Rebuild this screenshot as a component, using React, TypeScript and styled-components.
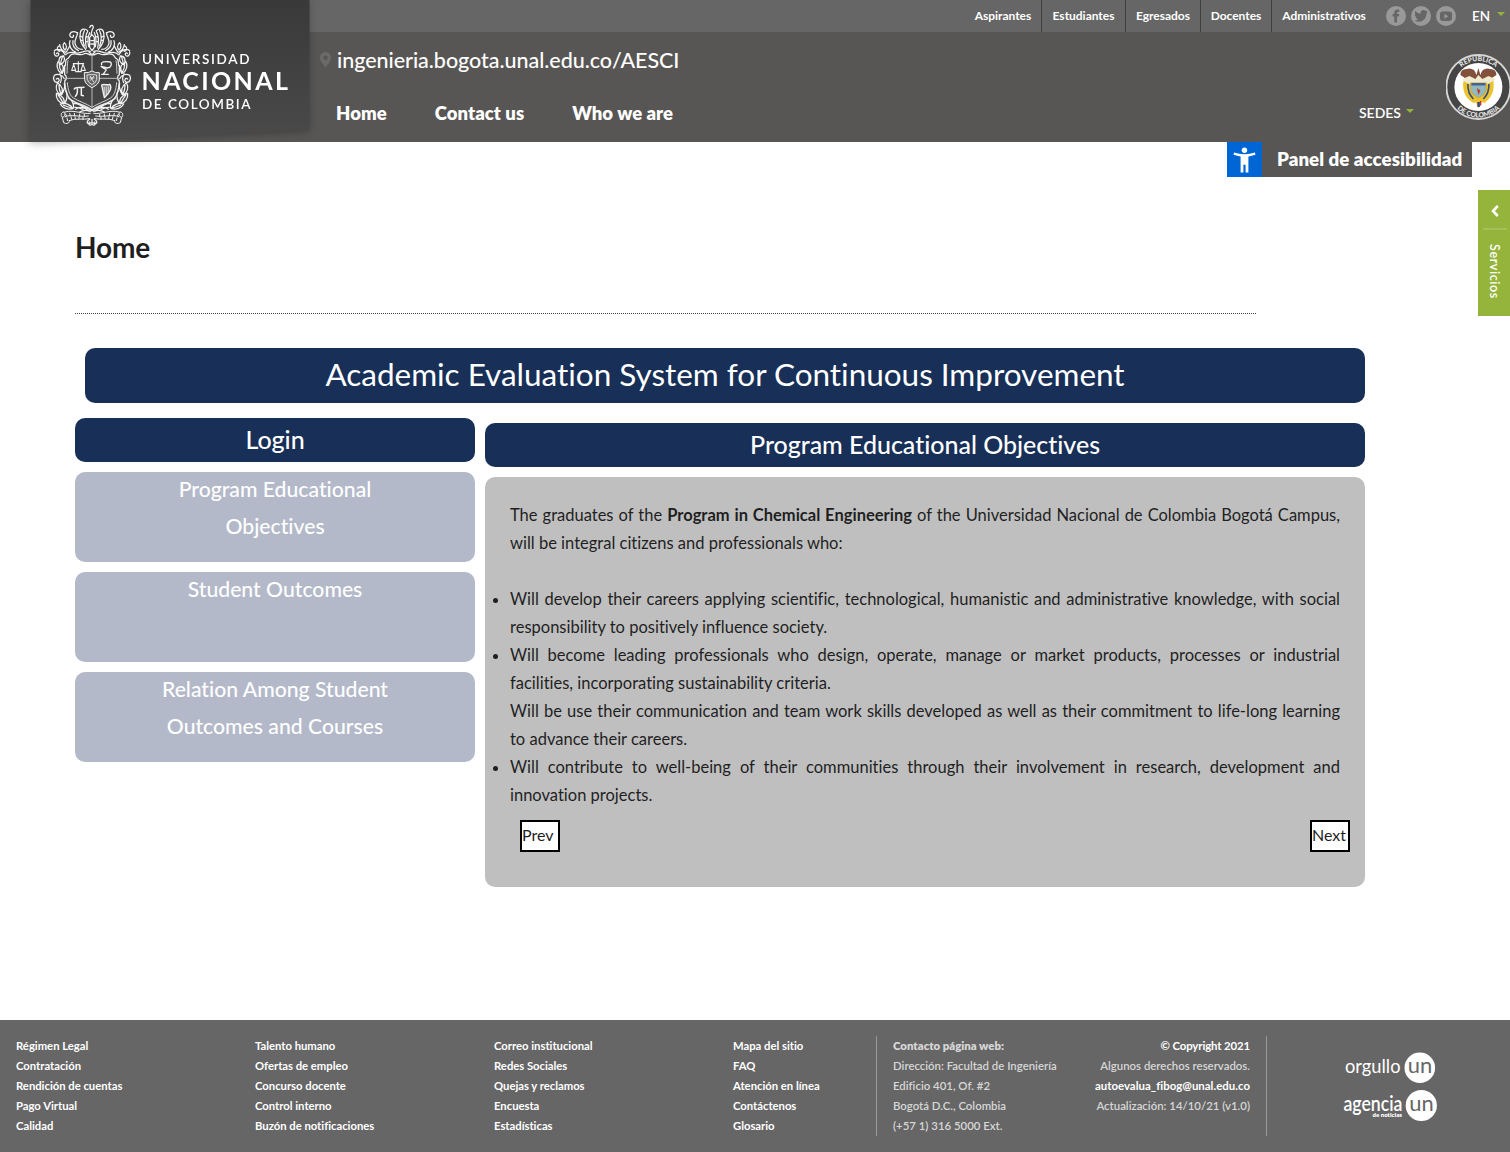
import React from "react";
import styled, { createGlobalStyle } from "styled-components";

const GlobalStyle = createGlobalStyle`
  * { box-sizing: border-box; }
  body {
    margin: 0;
    background: #fff;
    color: #1f1f1f;
    font-family: Lato, "Open Sans", sans-serif;
    font-variant-ligatures: none;
    overflow: hidden;
  }
  ul { margin: 0; padding: 0; list-style: none; }
  a { color: inherit; text-decoration: none; }
`;

const Page = styled.div`
  position: relative;
  width: 1510px;
  height: 1152px;
  display: flex;
  flex-direction: column;
  overflow: hidden;
`;

/* ---------- header ---------- */

const Header = styled.header`
  position: relative;
  z-index: 1;
  height: 142px;
  background: #585654;
  color: #fff;
  display: flex;
  flex-direction: column;
`;

const TopBar = styled.div`
  height: 32px;
  background: #666;
  display: flex;
  justify-content: flex-end;
  align-items: center;
`;

const ProfileLink = styled.a<{ $width: number }>`
  width: ${(p) => p.$width}px;
  height: 32px;
  line-height: 31px;
  font-size: 12px;
  font-weight: 700;
  letter-spacing: -0.02px;
  text-align: center;
  border-left: 1px solid #403f3e;
  &:first-child { border-left-color: transparent; }
`;

const SocialList = styled.div`
  display: flex;
  gap: 5px;
  margin: 0 16px 0 10px;
`;

const Language = styled.a`
  display: flex;
  align-items: center;
  gap: 7px;
  width: 38px;
  font-size: 13.5px;
  font-weight: 600;
  line-height: 32px;
`;

const Caret = styled.span`
  width: 0;
  height: 0;
  margin-top: -4px;
  border: 4.5px solid transparent;
  border-top-color: #94b43b;
  border-bottom: 0;
`;

const HeaderBody = styled.div`
  flex: 1;
  display: flex;
  justify-content: space-between;
  padding-left: 320px;
`;

const SiteBlock = styled.div`
  display: flex;
  flex-direction: column;
  padding-top: 15px;
`;

const SiteAddress = styled.a`
  display: flex;
  align-items: center;
  gap: 6px;
  height: 26px;
  font-size: 21.5px;
  font-weight: 500;
  line-height: 26px;
  letter-spacing: -0.04px;
`;

const MainNav = styled.nav`
  display: flex;
  gap: 48px;
  padding: 28px 0 0 16px;
  font-size: 18.5px;
  font-weight: 800;
  line-height: 24px;
  letter-spacing: 0.05px;
`;

const HeaderSide = styled.div`
  display: flex;
  gap: 32px;
`;

const Campuses = styled.a`
  display: flex;
  align-items: center;
  align-self: flex-start;
  gap: 5px;
  margin-top: 71px;
  font-size: 14px;
  font-weight: 600;
  line-height: 20px;
`;

const SealFrame = styled.div`
  width: 64px;
  height: 68px;
  margin-top: 22px;
  overflow: hidden;
`;

const LogoShadow = styled.a`
  position: absolute;
  left: 30px;
  top: 0;
  width: 280px;
  height: 142px;
  filter: drop-shadow(-1px 1px 4px rgba(0, 0, 0, 0.3));
`;

const LogoPanel = styled.div`
  width: 280px;
  height: 142px;
  background: linear-gradient(#393939, #4a4a4a);
  clip-path: polygon(0.5px 0, 279.5px 0, 279.5px 130px, 0.5px 142px);
`;

const AccessPanel = styled.div`
  position: absolute;
  left: 1227px;
  top: 142px;
  display: flex;
  width: 245px;
  height: 35px;
  background: #585654;
  color: #fff;
`;

const AccessIcon = styled.span`
  display: grid;
  place-items: center;
  width: 35px;
  background: #0066d6;
`;

const AccessLabel = styled.span`
  padding-left: 15px;
  font-size: 18.7px;
  font-weight: 800;
  line-height: 35px;
  letter-spacing: 0.06px;
`;

const ServicesTab = styled.div`
  position: absolute;
  right: 0;
  top: 190px;
  width: 32px;
  height: 126px;
  display: flex;
  flex-direction: column;
  align-items: center;
  background: #94b43b;
  color: #fff;
`;

const ServicesArrow = styled.span`
  width: 24px;
  height: 40px;
  margin-left: 2px;
  display: grid;
  place-items: center;
  padding-top: 3px;
  border-bottom: 2px solid #a5c05a;
`;

const ServicesLabel = styled.span`
  writing-mode: vertical-rl;
  margin-top: 14px;
  font-size: 12.5px;
  font-weight: 600;
  letter-spacing: 0.6px;
  line-height: 16px;
`;

/* ---------- content ---------- */

const Main = styled.main`
  flex: 1;
  width: 1365px;
  padding: 89px 0 0 75px;
`;

const PageTitle = styled.h1`
  width: 1181px;
  height: 83px;
  margin: 0 0 34px;
  border-bottom: 1px dotted #444;
  font-size: 28px;
  font-weight: 700;
  line-height: 33px;
  letter-spacing: -0.15px;
`;

const Banner = styled.div<{ $size: number; $height: number }>`
  height: ${(p) => p.$height}px;
  border-radius: 10px;
  background: #182f57;
  color: #fff;
  font-size: ${(p) => p.$size}px;
  font-weight: 500;
  letter-spacing: -0.02px;
  line-height: ${(p) => p.$height - 2}px;
  text-align: center;
`;

const TitleBanner = styled(Banner)`
  margin-left: 10px;
  font-weight: 400;
`;

const Columns = styled.div`
  display: grid;
  grid-template-columns: 400px 880px;
  column-gap: 10px;
  padding-top: 15px;
`;

const SideMenu = styled.div`
  display: flex;
  flex-direction: column;
  gap: 10px;
`;

const MenuCard = styled.a`
  height: 90px;
  padding: 0 80px;
  border-radius: 10px;
  background: #b3b9c8;
  color: #fff;
  font-size: 21.2px;
  font-weight: 500;
  line-height: 37px;
  text-align: center;
`;

const CardLabel = styled.span`
  display: block;
  margin-top: -1px;
`;

const Objectives = styled.section`
  display: flex;
  flex-direction: column;
  gap: 10px;
  padding-top: 5px;
`;

const Slide = styled.div`
  height: 410px;
  padding: 24px 25px 0;
  border-radius: 10px;
  background: #bfbfbf;
  font-size: 16.5px;
  line-height: 28px;
  text-align: justify;
`;

const Intro = styled.p`
  margin: 0 0 28px;
`;

const Bullet = styled.li<{ $plain?: boolean }>`
  list-style: ${(p) => (p.$plain ? "none" : "disc")};
`;

const Pager = styled.div`
  display: flex;
  justify-content: space-between;
  margin: 11px -10px 0 10px;
`;

const PagerButton = styled.button`
  width: 40px;
  height: 32px;
  padding: 0 0 3px;
  border: 2px solid #000;
  background: #fff;
  color: #1f1f1f;
  font: 16px/25px Lato, sans-serif;
  text-align: left;
  white-space: nowrap;
`;

/* ---------- footer ---------- */

const Footer = styled.footer`
  height: 132px;
  padding: 16px 0 0 16px;
  display: flex;
  background: #666;
  color: #fff;
  font-size: 11.3px;
  font-weight: 700;
  line-height: 20px;
  letter-spacing: -0.02px;
`;

const LinkColumn = styled.ul`
  width: 239px;
  &:nth-child(4) { width: 143px; }
`;

const ContactBlock = styled.div`
  display: flex;
  justify-content: space-between;
  width: 391px;
  height: 100px;
  padding: 0 16px;
  border: solid #999;
  border-width: 0 1px;
  color: #d6d6d6;
  font-size: 11.4px;
  font-weight: 600;
  letter-spacing: 0;
`;

const ContactColumn = styled.div<{ $end?: boolean }>`
  display: flex;
  flex-direction: column;
  text-align: ${(p) => (p.$end ? "right" : "left")};
`;

const ContactTitle = styled.b`
  font-weight: 800;
`;

const Bright = styled.span<{ $wide?: boolean }>`
  color: #fff;
  font-weight: 700;
  letter-spacing: ${(p) => (p.$wide ? 0.03 : -0.12)}px;
`;

const BrandBlock = styled.div`
  padding: 14px 0 0 76px;
  font-weight: 400;
  letter-spacing: 0;
`;

/* ---------- drawings ---------- */

function CrestHalf() {
  return (
    <g id="crest-half" fill="none" stroke="#f2f2f2" strokeWidth="3.8" strokeLinecap="round" strokeLinejoin="round">
      <path d="M141 104C132 108 128 96 118 101C104 110 94 97 80 103C72 106 74 116 66 117C58 119 66 132 59 140L59 164C66 168 66 178 59 183C60 204 64 224 74 236C92 252 118 252 141 270" />
      <path d="M69 122C66 132 67 150 66 160M67 188C69 210 74 226 84 233C102 245 124 250 141 262" strokeWidth="2.4" />
      <path d="M128 32C120 24 108 26 106 38C101 56 110 76 122 88M128 34C120 46 120 62 124 84M118 32C111 46 112 60 118 78M134 38C129 48 128 64 131 80M106 48L112 52M107 60L113 62M122 52L127 50M123 66L129 64" />
      <path d="M96 38C84 30 72 38 75 48C79 56 88 51 85 46M98 38C96 54 88 58 90 70C93 82 103 88 112 88M75 62C69 76 79 92 92 96M84 62C82 74 88 86 100 92M62 104C74 88 90 104 106 98C118 94 126 90 136 94" />
      <path d="M58 68C52 74 54 86 60 90C66 84 66 76 58 68M44 74C46 86 50 92 60 96M74 78C70 86 68 92 62 98M28 96C26 104 34 112 40 106C44 100 38 96 35 101M28 92C38 84 54 90 60 104M42 78C34 82 36 92 44 94" />
      <path d="M56 108C42 108 38 122 46 134C56 130 62 120 56 108M52 112C48 120 48 126 47 132M42 122C32 134 36 150 48 160C58 150 56 136 48 132M43 130C42 142 46 150 50 156M59 136C56 146 56 152 52 160" />
      <path d="M28 166C22 176 28 190 40 186C46 180 40 172 34 177M28 166C38 160 52 164 58 176M44 162C50 170 50 180 46 188" />
      <path d="M38 188C30 202 34 216 46 224C56 214 54 200 38 188M42 196C42 206 44 214 47 220M58 190C62 204 56 214 50 224M34 220C32 236 42 248 56 252C62 240 52 226 34 220M40 226C46 234 50 242 54 248M62 212C70 224 66 238 60 250" />
      <path d="M46 252C52 264 68 270 84 266C76 252 60 248 46 252M56 256C64 258 72 262 78 264M70 234C82 240 86 252 86 264M86 250C104 250 116 260 126 268M92 268C102 258 118 262 130 272M90 262C98 262 106 264 114 268" />
      <path d="M57 276C48 276 46 286 52 292C60 290 62 282 57 276M60 276C90 268 112 284 136 280M52 292L56 308C66 314 76 308 72 302C90 294 116 300 134 296M60 290C80 282 104 292 130 288M66 294L68 302M78 290L80 298M90 290L91 296M102 291V297M114 292V298M62 282L64 288M74 280L76 287M88 280L89 287M104 282V289M118 283V290" strokeWidth="3" />
      <path d="M136 274C126 270 114 270 104 276M141 272L120 262M134 298C120 306 128 316 138 308" />
    </g>
  );
}

function UniversityLogo() {
  return (
    <svg width="280" height="142" viewBox="30 0 280 142">
      <g transform="translate(45 20) scale(.3333)">
        <CrestHalf />
        <use href="#crest-half" transform="translate(282 0) scale(-1 1)" />
        <g stroke="#f2f2f2" fill="none" strokeWidth="3" strokeLinecap="round" strokeLinejoin="round">
          <path d="M141 108V262M62 175H220" stroke="#bbb" />
          <path d="M136 18C144 12 148 22 142 28L138 44M138 18L134 22M134 52L141 44L148 52V82L141 92L134 82ZM132 96L141 104L150 96M138 62H145M138 72H145" strokeWidth="3.8" />
          <path d="M119 158Q130 160 141 153Q152 160 163 158V180Q162 193 141 203Q120 193 119 180Z" fill="#666" />
          <path d="M127 165Q141 162 155 165V179Q153 188 141 194Q129 188 127 179ZM134 174H147M136 181L146 169M136 169L146 186" strokeWidth="2.5" />
          <path d="M85 131H116M100 125V154M92 155H109M86 133L80 151H92ZM114 133L108 151H121Z" strokeWidth="3.3" />
          <path d="M170 134C166 125 181 124 195 126C202 128 200 143 187 144L168 139C176 148 189 146 181 154L176 161M170 163H190" strokeWidth="4" />
          <path d="M88 207C91 201 97 204 117 202M97 204C98 215 96 225 91 229M109 204V226L115 227" strokeWidth="4.5" />
          <path d="M170 195C178 190 184 197 195 193C202 203 195 217 178 233L170 195Z" fill="#888" strokeWidth="4" />
          <path d="M178 202V226M184 202V223M190 200V216" strokeWidth="2" />
          <path d="M133 306C128 314 138 320 141 311C144 320 154 314 149 306M141 298V312" strokeWidth="3.8" />
        </g>
      </g>
      <g fill="#fff" fontFamily="Lato" fontWeight="600">
        <text x="142" y="63.5" fontSize="13.5" textLength="107.5">UNIVERSIDAD</text>
        <text x="141.5" y="90" fontSize="25" fontWeight="700" textLength="146.5">NACIONAL</text>
        <text x="142" y="109" fontSize="13.5" textLength="108.5">DE COLOMBIA</text>
      </g>
    </svg>
  );
}

function NationalSeal() {
  return (
    <svg width="66" height="68" viewBox="0.6 0 66 68">
      <defs>
        <path id="seal-top" d="M7 33a26 26 0 0 1 52 0" />
        <path id="seal-bottom" d="M2.6 33a30.400 30.400 0 0 0 60.800 0" />
      </defs>
      <circle cx="33" cy="33" r="32" fill="#454545" stroke="#d6d6d6" strokeWidth="1.9" />
      <circle cx="33" cy="33" r="24" fill="#fff" />
      <g fill="#e4e4e4" fontFamily="Lato" fontWeight="900" fontSize="6.8">
        <text><textPath href="#seal-top" startOffset="50%" textAnchor="middle">REPÚBLICA</textPath></text>
        <text><textPath href="#seal-bottom" startOffset="50%" textAnchor="middle">DE COLOMBIA</textPath></text>
      </g>
      <path d="M15 21Q15 15 21 15Q29 13 31 21L33 14L35 21Q37 13 45 15Q51 15 51 21L45 25L38 26H28L21 25Z" fill="#81513d" />
      <path d="M17 25L24 22L30 25L33 21L37 25L43 22L50 25L46 30H21Z" fill="#efe9cf" />
      <path d="M18 27Q16 42 28 49L34 47L39 49Q50 41 48 27L42 30H24Z" fill="#edc32d" />
      <path d="M22.5 30Q22 39 28 45M43.500 30Q44 39 38 45" fill="none" stroke="#2e4d86" strokeWidth="1.600" />
      <path d="M25 29H41V36Q40 41 33 44Q26 41 25 36Z" fill="#8fb9bd" stroke="#d9a92a" />
      <path d="M26 29H40V31.500H26Z" fill="#3f6396" />
      <path d="M31.500 34L35 36.500L33 41Z" fill="#c8362d" />
      <path d="M30 46H36L35 50L33 54L31 50Z" fill="#edc32d" />
      <path d="M32 48H34.500V53H32Z" fill="#2e4d86" />
      <path d="M34.500 47H36V51L34.500 52Z" fill="#c8362d" />
    </svg>
  );
}

function Facebook() {
  return (
    <svg width="20" height="20" viewBox="0 0 20 20">
      <circle cx="10" cy="10" r="10" fill="#999" />
      <path d="M8.3 16.5V10.5H6.6V8H8.3V6.7C8.3 4.7 9.4 3.6 11.3 3.6H13.2V6H12C11.3 6 11 6.3 11 6.9V8H13.2L12.9 10.5H11V16.5Z" fill="#666" />
    </svg>
  );
}

function Twitter() {
  return (
    <svg width="20" height="20" viewBox="0 0 20 20">
      <circle cx="10" cy="10" r="10" fill="#999" />
      <path d="M16.8 6.1L15.5 7.6C15.5 12 12.4 15.7 8 15.7C6.2 15.7 4.6 15.2 3.4 14.3C5 14.4 6.3 14 7.2 13.2C5.9 13 5 12.2 4.7 11.2H5.9C4.5 10.6 3.8 9.7 3.8 8.4L5 8.7C3.8 7.6 3.6 6.2 4.3 4.9C5.7 6.6 7.5 7.5 9.8 7.6C9.4 5.5 10.8 4.1 12.5 4.1C13.4 4.1 14.1 4.5 14.6 5L16.3 4.4L15.6 5.8Z" fill="#666" />
    </svg>
  );
}

function YouTube() {
  return (
    <svg width="20" height="20" viewBox="0 0 20 20">
      <circle cx="10" cy="10" r="10" fill="#999" />
      <rect x="4" y="5.5" width="12" height="9.5" rx="2.4" fill="#666" />
      <path d="M8.4 7.7L12.2 10.2L8.4 12.7Z" fill="#999" />
    </svg>
  );
}

function MapPin() {
  return (
    <svg width="11" height="16" viewBox="0 0 11 16">
      <path fillRule="evenodd" d="M5.5 0A5.5 5.5 0 0 0 0 5.5C0 9.5 4 12.5 5.5 16C7 12.5 11 9.5 11 5.5A5.5 5.5 0 0 0 5.5 0ZM5.5 3.5A2.2 2.2 0 1 1 5.5 7.9A2.2 2.2 0 0 1 5.5 3.5Z" fill="#6b6a69" />
    </svg>
  );
}

function AccessFigure() {
  return (
    <svg width="23" height="26" viewBox="0 0 23 26" fill="#fff">
      <circle cx="11.5" cy="3.2" r="2.7" />
      <path d="M1 5.6Q6 7.3 11.5 7.3T22 5.6L22.4 7.8Q18.5 9 15.4 9.4V25.4H12.6V17.8H10.4V25.4H7.6V9.4Q4.5 9 .6 7.8Z" />
    </svg>
  );
}

function Brands() {
  return (
    <svg width="96" height="74" viewBox="1343 1050 96 74" fontFamily="Lato" fill="#fff">
      <text x="1345" y="1072.7" fontSize="19.5" textLength="55.5" lengthAdjust="spacingAndGlyphs">orgullo</text>
      <circle cx="1419.8" cy="1067.7" r="15.3" />
      <text x="1343.5" y="1111" fontSize="20.5" fontWeight="600" textLength="59" lengthAdjust="spacingAndGlyphs">agencia</text>
      <text x="1372.5" y="1116.8" fontSize="6.3" fontWeight="800" textLength="29.5" lengthAdjust="spacingAndGlyphs">de noticias</text>
      <circle cx="1421.3" cy="1105.5" r="15.6" />
      <g fill="#666" fontSize="21" fontWeight="400">
        <text x="1407.800" y="1072.500" textLength="24.500" lengthAdjust="spacingAndGlyphs">un</text>
        <text x="1409.300" y="1110.600" textLength="24.500" lengthAdjust="spacingAndGlyphs">un</text>
      </g>
    </svg>
  );
}

/* ---------- data ---------- */

const profiles: [string, number][] = [
  ["Aspirantes", 77],
  ["Estudiantes", 84],
  ["Egresados", 75],
  ["Docentes", 71],
  ["Administrativos", 105],
];

const footerLinks = [
  ["Régimen Legal", "Contratación", "Rendición de cuentas", "Pago Virtual", "Calidad"],
  ["Talento humano", "Ofertas de empleo", "Concurso docente", "Control interno", "Buzón de notificaciones"],
  ["Correo institucional", "Redes Sociales", "Quejas y reclamos", "Encuesta", "Estadísticas"],
  ["Mapa del sitio", "FAQ", "Atención en línea", "Contáctenos", "Glosario"],
];

export default function App() {
  return (
    <>
      <GlobalStyle />
      <Page>
        <Header>
          <TopBar>
            {profiles.map(([label, width]) => (
              <ProfileLink key={label} $width={width}>{label}</ProfileLink>
            ))}
            <SocialList>
              <Facebook />
              <Twitter />
              <YouTube />
            </SocialList>
            <Language>EN<Caret /></Language>
          </TopBar>
          <HeaderBody>
            <SiteBlock>
              <SiteAddress><MapPin />ingenieria.bogota.unal.edu.co/AESCI</SiteAddress>
              <MainNav>
                <a>Home</a>
                <a>Contact us</a>
                <a>Who we are</a>
              </MainNav>
            </SiteBlock>
            <HeaderSide>
              <Campuses>SEDES<Caret /></Campuses>
              <SealFrame><NationalSeal /></SealFrame>
            </HeaderSide>
          </HeaderBody>
          <LogoShadow>
            <LogoPanel><UniversityLogo /></LogoPanel>
          </LogoShadow>
        </Header>

        <AccessPanel>
          <AccessIcon><AccessFigure /></AccessIcon>
          <AccessLabel>Panel de accesibilidad</AccessLabel>
        </AccessPanel>
        <ServicesTab>
          <ServicesArrow>
            <svg width="8" height="12" viewBox="0 0 8 12" fill="none" stroke="#fff" strokeWidth="2.6">
              <path d="M6.8 1L2 6L6.8 11" />
            </svg>
          </ServicesArrow>
          <ServicesLabel>Servicios</ServicesLabel>
        </ServicesTab>

        <Main>
          <PageTitle>Home</PageTitle>
          <TitleBanner $size={31.5} $height={55}>Academic Evaluation System for Continuous Improvement</TitleBanner>
          <Columns>
            <SideMenu>
              <Banner $size={25} $height={44}>Login</Banner>
              <MenuCard><CardLabel>Program Educational Objectives</CardLabel></MenuCard>
              <MenuCard><CardLabel>Student Outcomes</CardLabel></MenuCard>
              <MenuCard><CardLabel>Relation Among Student Outcomes and Courses</CardLabel></MenuCard>
            </SideMenu>
            <Objectives>
              <Banner $size={25} $height={44}>Program Educational Objectives</Banner>
              <Slide>
                <Intro>
                  The graduates of the <strong>Program in Chemical Engineering</strong> of the Universidad Nacional de
                  Colombia Bogotá Campus, will be integral citizens and professionals who:
                </Intro>
                <ul>
                  <Bullet>
                    Will develop their careers applying scientific, technological, humanistic and administrative
                    knowledge, with social responsibility to positively influence society.
                  </Bullet>
                  <Bullet>
                    Will become leading professionals who design, operate, manage or market products, processes or
                    industrial facilities, incorporating sustainability criteria.
                  </Bullet>
                  <Bullet $plain>
                    Will be use their communication and team work skills developed as well as their commitment to
                    life-long learning to advance their careers.
                  </Bullet>
                  <Bullet>
                    Will contribute to well-being of their communities through their involvement in research,
                    development and innovation projects.
                  </Bullet>
                </ul>
                <Pager>
                  <PagerButton>Prev</PagerButton>
                  <PagerButton>Next</PagerButton>
                </Pager>
              </Slide>
            </Objectives>
          </Columns>
        </Main>

        <Footer>
          {footerLinks.map((column) => (
            <LinkColumn key={column[0]}>
              {column.map((label) => (
                <li key={label}><a>{label}</a></li>
              ))}
            </LinkColumn>
          ))}
          <ContactBlock>
            <ContactColumn>
              <ContactTitle>Contacto página web:</ContactTitle>
              <span>Dirección: Facultad de Ingeniería</span>
              <span>Edificio 401, Of. #2</span>
              <span>Bogotá D.C., Colombia</span>
              <span>(+57 1) 316 5000 Ext.</span>
            </ContactColumn>
            <ContactColumn $end>
              <Bright>© Copyright 2021</Bright>
              <span>Algunos derechos reservados.</span>
              <Bright $wide>autoevalua_fibog@unal.edu.co</Bright>
              <span>Actualización: 14/10/21 (v1.0)</span>
            </ContactColumn>
          </ContactBlock>
          <BrandBlock><Brands /></BrandBlock>
        </Footer>
      </Page>
    </>
  );
}
